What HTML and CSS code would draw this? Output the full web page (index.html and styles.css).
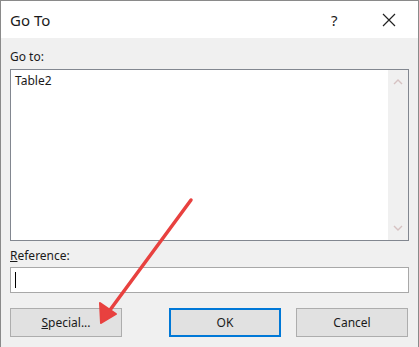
FILE: index.html
```html
<!DOCTYPE html>
<html lang="en">
<head>
  <meta charset="UTF-8">
  <title>Go To</title>
  <link rel="stylesheet" href="styles.css">
</head>
<body>
  <div class="window">
    <div class="titlebar">
      <span class="title">Go To</span>
      <span class="help">?</span>
      <span class="close">
        <svg width="14" height="14" viewBox="0 0 14 14"><path d="M1 1 L13 13 M13 1 L1 13" stroke="#222" stroke-width="1.2" fill="none"/></svg>
      </span>
    </div>

    <div class="content">
      <div class="label first">Go to:</div>
      <div class="listbox">
        <div class="items">
          <div class="item">Table2</div>
        </div>
        <div class="scrollbar">
          <svg width="10" height="6" viewBox="0 0 10 6"><path d="M1 5 L5 1 L9 5" stroke="#d6c2c2" stroke-width="1.4" fill="none"/></svg>
          <svg width="10" height="6" viewBox="0 0 10 6"><path d="M1 1 L5 5 L9 1" stroke="#d6c2c2" stroke-width="1.4" fill="none"/></svg>
        </div>
      </div>

      <div class="label"><u>R</u>eference:</div>
      <div class="textbox"><span class="caret"></span></div>

      <div class="buttons">
        <button class="btn special"><u>S</u>pecial...</button>
        <button class="btn default">OK</button>
        <button class="btn">Cancel</button>
      </div>
    </div>

    <!-- annotation arrow -->
    <svg class="arrow" width="419" height="347" viewBox="0 0 419 347">
      <line x1="191" y1="200" x2="110" y2="310" stroke="#e8413f" stroke-width="3.5" stroke-linecap="round"/>
      <polygon points="101,323 100,303 116,314" fill="#e8413f" stroke="#e8413f" stroke-width="2" stroke-linejoin="round"/>
    </svg>
  </div>
</body>
</html>
```

FILE: styles.css
```css
body {
  margin: 0;
  font-family: "Noto Sans", "Open Sans", sans-serif;
  color: #1a1a1a;
}

.window {
  position: relative;
  width: 419px;
  height: 347px;
  box-sizing: border-box;
  border: 1px solid #8a8a8a;
  border-bottom: none;
  background-color: #f0f0f0;
}

.titlebar {
  height: 37px;
  background-color: #fff;
  display: flex;
  align-items: center;
  padding-left: 9px;
}

.title {
  font-size: 15px;
  flex: 1;
}

.help {
  font-size: 15px;
  width: 30px;
  margin-right: 21px;
}

.close {
  width: 36px;
  display: flex;
  align-items: center;
}

.content {
  padding: 0 9px;
}

.label {
  font-size: 12px;
  line-height: 15px;
  margin-top: 7px;
  margin-bottom: 4px;
}

.label.first {
  margin-top: 11px;
  margin-bottom: 5px;
}

.listbox {
  height: 172px;
  box-sizing: border-box;
  border: 1px solid #828790;
  background-color: #fff;
  display: flex;
}

.items {
  flex: 1;
  padding: 3px 4px;
}

.item {
  font-size: 12px;
  line-height: 15px;
}

.scrollbar {
  width: 20px;
  background-color: #f0f0f0;
  display: flex;
  flex-direction: column;
  justify-content: space-between;
  align-items: center;
  padding: 9px 0 9px;
}

.textbox {
  height: 26px;
  box-sizing: border-box;
  border: 1px solid #a8a8a8;
  background-color: #fff;
  display: flex;
  align-items: center;
  padding-left: 4px;
}

.caret {
  width: 1px;
  height: 16px;
  background-color: #000;
}

.buttons {
  display: flex;
  gap: 15px;
  margin-top: 15px;
  padding-right: 1px;
}

.btn {
  width: 112px;
  height: 29px;
  box-sizing: border-box;
  border: 1px solid #adadad;
  background-color: #e1e1e1;
  font-family: "Noto Sans", "Open Sans", sans-serif;
  font-size: 12px;
  color: #1a1a1a;
  padding: 0;
}

.btn.special {
  margin-right: auto;
}

.btn.default {
  border: 2px solid #0078d7;
}

.arrow {
  position: absolute;
  left: -1px;
  top: -1px;
}
```
